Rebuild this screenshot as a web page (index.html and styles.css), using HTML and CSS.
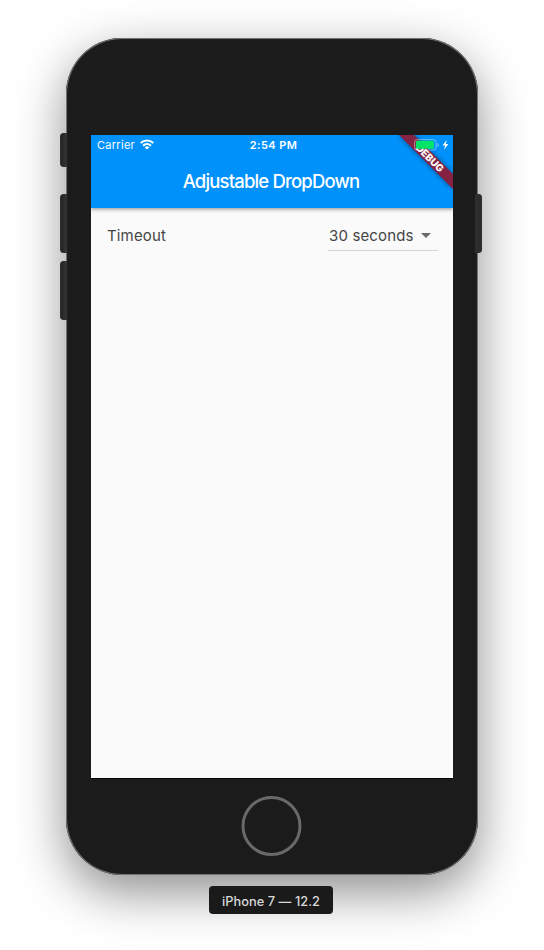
FILE: index.html
```html
<!DOCTYPE html>
<html lang="en">
<head>
<meta charset="utf-8">
<title>Adjustable DropDown</title>
<link rel="stylesheet" href="styles.css">
</head>
<body>
<main class="stage">
  <div class="phone">
    <i class="key key-mute"></i>
    <i class="key key-up"></i>
    <i class="key key-down"></i>
    <i class="key key-power"></i>
    <div class="screen">
      <header class="appbar">
        <div class="status">
          <span class="carrier">Carrier</span>
          <svg class="wifi" width="14" height="11" viewBox="0 0 14 11" fill="none" stroke="#fff" stroke-width="2.1">
            <path d="M.7 4.1a9.1 9.1 0 0 1 12.6 0"/>
            <path d="M3.1 6.7a5.7 5.7 0 0 1 7.8 0"/>
            <path d="M7 10.6 4.7 8.4a3.3 3.3 0 0 1 4.6 0z" fill="#fff" stroke="none"/>
          </svg>
          <time class="clock">2:54 PM</time>
        </div>
        <h1 class="title">Adjustable DropDown</h1>
      </header>
      <section class="row">
        <span class="label">Timeout</span>
        <div class="dropdown">
          <span class="value">30 seconds</span>
          <svg class="arrow" width="10" height="5" viewBox="0 0 10 5"><path d="M0 0h10L5 5z" fill="#6b6b6b"/></svg>
        </div>
      </section>
      <svg class="corner" width="66" height="66" viewBox="0 0 66 66">
        <defs>
          <filter id="soft" x="-20%" y="-20%" width="140%" height="140%"><feGaussianBlur stdDeviation="2.6"/></filter>
        </defs>
        <path d="M12 0h15l39 39v15z" fill="#000" opacity=".5" filter="url(#soft)"/>
        <path d="M12 0h15l39 39v15z" fill="#852244"/>
        <text class="debug" transform="translate(42.9 23.1) rotate(45)" x="0" y="3.6" text-anchor="middle" textLength="34.5">DEBUG</text>
        <rect x="27.5" y="4.6" width="21.6" height="10.4" rx="2.8" fill="none" stroke="#fff" stroke-opacity=".42"/>
        <path d="M50.5 8v4c1.7-.5 1.7-3.5 0-4z" fill="#fff" opacity=".45"/>
        <rect x="28.9" y="5.8" width="18" height="8" rx="1.2" fill="#00e568"/>
        <path d="M59.6 4.9 55.6 10.4h2.5l-1.1 4.3 4.4-5.7h-2.5z" fill="#fff"/>
      </svg>
    </div>
    <div class="home"></div>
  </div>
  <div class="caption">iPhone 7 — 12.2</div>
</main>
</body>
</html>
```
FILE: styles.css
```css
* { box-sizing: border-box; }
body {
  margin: 0;
  background: #fff;
  font-family: Inter, "Liberation Sans", sans-serif;
}
.stage {
  height: 950px;
  padding-top: 38px;
  display: flex;
  flex-direction: column;
  align-items: center;
  overflow: hidden;
}
.phone {
  position: relative;
  width: 412px;
  height: 837px;
  flex: none;
  padding: 97px 25px 0;
  border-radius: 56px;
  background: #1b1b1b;
  box-shadow: inset 0 0 0 1px #727272, inset 0 0 1px 1px #4b4b4b, 0 17px 50px rgba(0, 0, 0, .45);
}
.screen {
  position: relative;
  width: 362px;
  height: 643px;
  background: #fafafa;
  overflow: hidden;
  box-shadow: 0 1px 0 #050505;
}
.appbar {
  height: 73px;
  background: #0091fb;
  color: #fff;
  box-shadow: 0 1px 4px rgba(0, 0, 0, .45);
}
.status {
  position: relative;
  height: 20px;
  padding-left: 6px;
  display: flex;
  align-items: center;
  gap: 5px;
  font-size: 11px;
}
.carrier { letter-spacing: .28px; }
.wifi { margin-top: -2px; }
.clock {
  position: absolute;
  left: 0;
  right: 0;
  text-align: center;
  font-size: 11px;
  font-weight: 600;
  letter-spacing: .4px;
  padding-left: 3px;
}
.title {
  margin: 0;
  height: 53px;
  line-height: 53px;
  padding-right: 2px;
  text-align: center;
  font-size: 18.5px;
  font-weight: 500;
  letter-spacing: -.83px;
}
.row {
  display: flex;
  justify-content: space-between;
  align-items: flex-start;
  padding: 12px 15px 0 16px;
  font-size: 15px;
  line-height: 32px;
  color: #454545;
}
.label { letter-spacing: .15px; }
.dropdown {
  display: flex;
  align-items: center;
  justify-content: space-between;
  width: 110px;
  height: 31px;
  padding: 0 7px 0 1px;
  border-bottom: 1px solid #d6d6d6;
  white-space: nowrap;
}
.value { padding-top: 2px; letter-spacing: .15px; }
.corner { position: absolute; top: 0; right: 0; }
.debug {
  fill: #fff;
  font-size: 10px;
  font-weight: 800;
}
.home {
  width: 60px;
  height: 60px;
  margin: 18px auto 0;
  transform: translateX(-.5px);
  border: 3px solid #696969;
  border-radius: 50%;
}
.key {
  position: absolute;
  width: 7px;
  background: linear-gradient(90deg, #242424, #343434);
  border: 1px solid #303030;
}
.key-mute, .key-up, .key-down { left: -6px; border-radius: 3px 0 0 3px; }
.key-mute { top: 95px; height: 34px; }
.key-up { top: 156px; height: 59px; }
.key-down { top: 223px; height: 59px; }
.key-power {
  right: -4px;
  top: 156px;
  height: 59px;
  border-radius: 0 3px 3px 0;
  background: #2d2d2d;
}
.caption {
  position: relative;
  width: 124px;
  height: 28px;
  margin: 11px 2px 0 0;
  border-radius: 4px;
  background: #1a1a1a;
  color: #d8d8d8;
  font-size: 12.8px;
  font-weight: 500;
  letter-spacing: .05px;
  line-height: 31px;
  text-align: center;
  white-space: nowrap;
}
```
